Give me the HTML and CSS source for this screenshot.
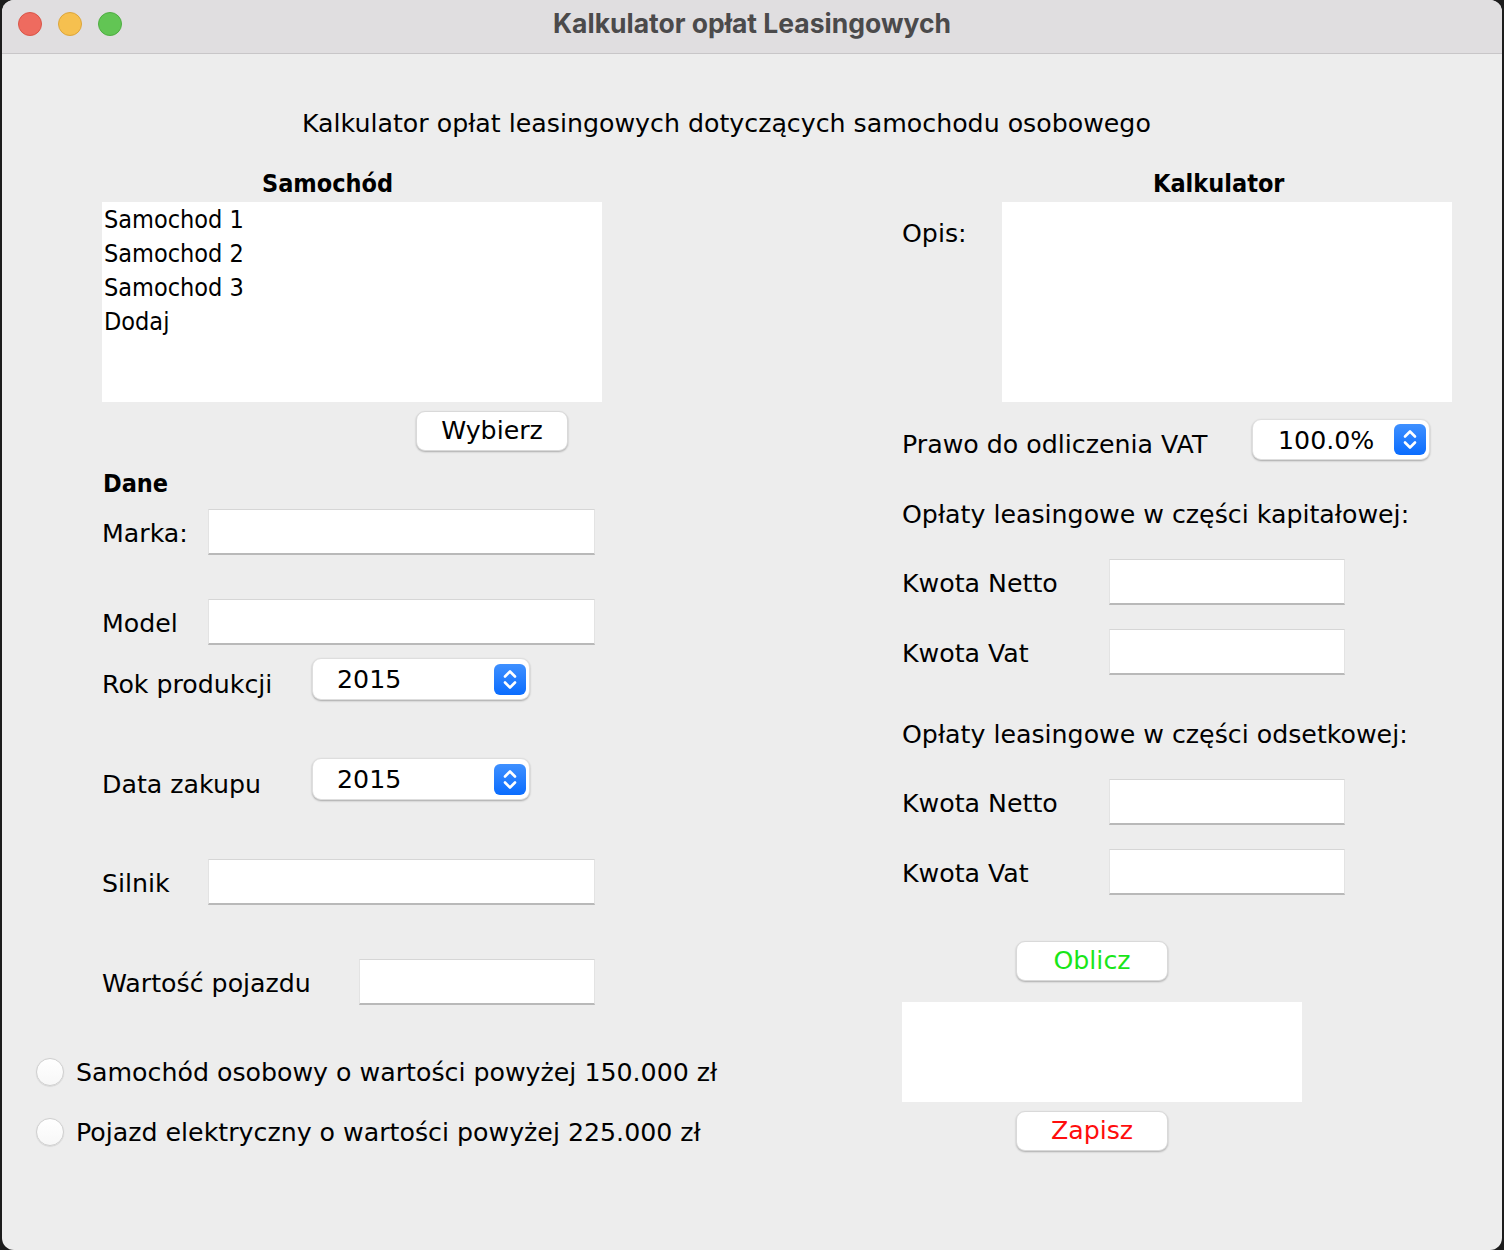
FILE: index.html
```html
<!DOCTYPE html>
<html lang="pl">
<head>
<meta charset="utf-8">
<title>Kalkulator opłat Leasingowych</title>
<link rel="stylesheet" href="styles.css">
</head>
<body>
<div class="window">
  <div class="titlebar">
    <div class="lights">
      <span class="light red"></span>
      <span class="light yellow"></span>
      <span class="light green"></span>
    </div>
    <div class="wtitle">Kalkulator opłat Leasingowych</div>
    <div></div>
  </div>
  <div class="content">
    <div class="heading">Kalkulator opłat leasingowych dotyczących samochodu osobowego</div>
    <div class="columns">
      <div class="col-left">
        <div class="sec-title sec-samochod">Samochód</div>
        <div class="listbox">
          <div class="item">Samochod 1</div>
          <div class="item">Samochod 2</div>
          <div class="item">Samochod 3</div>
          <div class="item">Dodaj</div>
        </div>
        <div class="btn btn-wybierz">Wybierz</div>
        <div class="sec-title sec-dane">Dane</div>
        <div class="row r-marka"><span class="lbl w106">Marka:</span><span class="field w387"></span></div>
        <div class="row r-model"><span class="lbl w106">Model</span><span class="field w387"></span></div>
        <div class="row crow r-rok"><span class="lbl w210">Rok produkcji</span><span class="combo w218"><span class="ctext">2015</span><span class="stepper"><svg width="32" height="31" viewBox="0 0 32 31"><path d="M11 12.5 L16 7.5 L21 12.5 M11 18.5 L16 23.5 L21 18.5" fill="none" stroke="#fff" stroke-width="2.6" stroke-linecap="round" stroke-linejoin="round"/></svg></span></span></div>
        <div class="row crow r-data"><span class="lbl w210">Data zakupu</span><span class="combo w218"><span class="ctext">2015</span><span class="stepper"><svg width="32" height="31" viewBox="0 0 32 31"><path d="M11 12.5 L16 7.5 L21 12.5 M11 18.5 L16 23.5 L21 18.5" fill="none" stroke="#fff" stroke-width="2.6" stroke-linecap="round" stroke-linejoin="round"/></svg></span></span></div>
        <div class="row r-silnik"><span class="lbl w106">Silnik</span><span class="field w387"></span></div>
        <div class="row r-wartosc"><span class="lbl w257">Wartość pojazdu</span><span class="field w236"></span></div>
        <div class="radio-row r-radio1"><span class="radio"></span><span class="rlbl">Samochód osobowy o wartości powyżej 150.000 zł</span></div>
        <div class="radio-row r-radio2"><span class="radio"></span><span class="rlbl">Pojazd elektryczny o wartości powyżej 225.000 zł</span></div>
      </div>
      <div class="col-right">
        <div class="sec-title sec-kalk">Kalkulator</div>
        <div class="opis-row">
          <span class="lbl w100 opis-lbl">Opis:</span>
          <div class="textarea"></div>
        </div>
        <div class="row crow r-vat"><span class="lbl w350">Prawo do odliczenia VAT</span><span class="combo w178 vat"><span class="ctext">100.0%</span><span class="stepper"><svg width="32" height="31" viewBox="0 0 32 31"><path d="M11 12.5 L16 7.5 L21 12.5 M11 18.5 L16 23.5 L21 18.5" fill="none" stroke="#fff" stroke-width="2.6" stroke-linecap="round" stroke-linejoin="round"/></svg></span></span></div>
        <div class="subhead r-kap">Opłaty leasingowe w części kapitałowej:</div>
        <div class="row r-n1"><span class="lbl w207">Kwota Netto</span><span class="field w236"></span></div>
        <div class="row r-v1"><span class="lbl w207">Kwota Vat</span><span class="field w236"></span></div>
        <div class="subhead r-ods">Opłaty leasingowe w części odsetkowej:</div>
        <div class="row r-n2"><span class="lbl w207">Kwota Netto</span><span class="field w236"></span></div>
        <div class="row r-v2"><span class="lbl w207">Kwota Vat</span><span class="field w236"></span></div>
        <div class="btn btn-oblicz">Oblicz</div>
        <div class="result"></div>
        <div class="btn btn-zapisz">Zapisz</div>
      </div>
    </div>
  </div>
</div>
</body>
</html>
```

FILE: styles.css
```css
html, body {
  margin: 0;
  padding: 0;
  background: #1c1c1c;
}
body {
  width: 1504px;
  height: 1250px;
  overflow: hidden;
}
.window {
  margin-left: 2px;
  width: 1500px;
  height: 1250px;
  background: #ededed;
  border-radius: 12px;
  overflow: hidden;
  font-family: "DejaVu Sans", sans-serif;
  font-size: 25.25px;
  color: #000;
}
.titlebar {
  height: 53px;
  background: #e0dee0;
  border-bottom: 1px solid #c8c6c8;
  display: grid;
  grid-template-columns: 1fr auto 1fr;
  align-items: center;
}
.lights {
  display: flex;
  gap: 16px;
  padding-left: 16px;
  margin-top: -6px;
}
.light {
  width: 24px;
  height: 24px;
  border-radius: 50%;
  box-sizing: border-box;
}
.red { background: #ee6b5f; border: 1px solid #d95548; }
.yellow { background: #f6c04f; border: 1px solid #dca53b; }
.green { background: #62c554; border: 1px solid #4fad42; }
.wtitle {
  font-family: Inter, "Liberation Sans", sans-serif;
  font-weight: 700;
  font-size: 26.5px;
  color: #4b4a4b;
  margin-top: -7px;
}
.heading {
  margin-top: 51px;
  line-height: 34px;
  padding-top: 2px;
  height: 32px;
  padding-left: 300px;
  white-space: nowrap;
}
.columns {
  display: flex;
  margin-top: 27px;
}
.col-left {
  margin-left: 34px;
  width: 866px;
  display: flex;
  flex-direction: column;
  align-items: flex-start;
}
.col-right {
  width: 560px;
  display: flex;
  flex-direction: column;
  align-items: flex-start;
}
.sec-title {
  font-family: "DejaVu Sans Condensed", "DejaVu Sans", sans-serif;
  font-size: 25px;
  font-weight: 700;
  line-height: 34px;
  height: 34px;
  padding-top: 1px;
  box-sizing: border-box;
  white-space: nowrap;
}
.sec-samochod { margin-left: 226px; }
.sec-kalk { margin-left: 251px; }
.sec-dane { margin-left: 67px; margin-top: 15px; }
.listbox {
  margin-top: 2px;
  margin-left: 66px;
  width: 500px;
  height: 200px;
  background: #fff;
  padding: 0 2px;
  box-sizing: border-box;
  font-family: "DejaVu Sans Condensed", "DejaVu Sans", sans-serif;
  font-size: 25px;
}
.item {
  line-height: 34px;
  height: 34px;
  padding-top: 1px;
  box-sizing: border-box;
  white-space: nowrap;
}
.btn {
  width: 152px;
  height: 40px;
  box-sizing: border-box;
  background: #fff;
  border-radius: 9px;
  border: 1px solid #d9d9d9;
  box-shadow: 0 1px 2px rgba(0,0,0,0.28);
  display: flex;
  align-items: center;
  justify-content: center;
  line-height: 1;
}
.btn-wybierz { margin-top: 9px; margin-left: 380px; }
.row {
  display: flex;
  align-items: center;
  margin-left: 66px;
}
.lbl {
  line-height: 34px;
  padding-top: 3px;
  white-space: nowrap;
  flex: none;
}
.w100 { width: 100px; }
.w106 { width: 106px; }
.w207 { width: 207px; }
.w210 { width: 210px; }
.w257 { width: 257px; }
.w350 { width: 350px; }
.field {
  display: block;
  height: 46px;
  background: #fff;
  box-sizing: border-box;
  border-top: 1px solid #d6d6d6;
  border-left: 1px solid #e3e3e3;
  border-right: 1px solid #e3e3e3;
  border-bottom: 2px solid #b9b9b9;
}
.w387 { width: 387px; }
.w236 { width: 236px; }
.w218 { width: 218px; }
.w178 { width: 178px; }
.r-marka { margin-top: 9px; height: 46px; }
.r-model { margin-top: 44px; height: 46px; }
.crow { height: 50px; }
.crow .combo { align-self: flex-start; }
.r-rok { margin-top: 13px; }
.r-data { margin-top: 50px; }
.r-silnik { margin-top: 51px; height: 46px; }
.r-wartosc { margin-top: 54px; height: 46px; }
.combo {
  display: flex;
  align-items: center;
  justify-content: space-between;
  height: 42px;
  box-sizing: border-box;
  background: #fff;
  border-radius: 9px;
  border: 1px solid #dedede;
  box-shadow: 0 1px 2px rgba(0,0,0,0.3);
  padding: 0 3px 0 24px;
}
.vat { height: 41px; padding-left: 25px; }
.ctext { line-height: 34px; padding-top: 2px; }
.stepper {
  width: 32px;
  height: 31px;
  border-radius: 6px;
  background: linear-gradient(#3f90ff, #0a6cfe);
  display: block;
}
.stepper svg { display: block; }
.radio-row {
  display: flex;
  align-items: center;
  height: 40px;
}
.r-radio1 { margin-top: 47px; }
.r-radio2 { margin-top: 20px; }
.radio {
  width: 28px;
  height: 28px;
  box-sizing: border-box;
  border-radius: 50%;
  background: linear-gradient(#ffffff, #f7f7f7);
  border: 1px solid #cfcfcf;
  box-shadow: 0 0.5px 1px rgba(0,0,0,0.15);
  margin-right: 12px;
}
.rlbl { line-height: 34px; padding-top: 2px; white-space: nowrap; }
.opis-row {
  display: flex;
  margin-top: 2px;
  align-items: flex-start;
}
.opis-lbl { margin-top: 12px; }
.textarea {
  width: 450px;
  height: 200px;
  background: #fff;
}
.r-vat { margin-left: 0; margin-top: 17px; height: 48px; }
.col-right .row { margin-left: 0; }
.subhead { line-height: 34px; height: 34px; padding-top: 2px; box-sizing: border-box; white-space: nowrap; }
.r-kap { margin-top: 29px; }
.r-ods { margin-top: 41px; }
.r-n1, .r-n2 { margin-top: 29px; height: 46px; }
.r-v1, .r-v2 { margin-top: 24px; height: 46px; }
.btn-oblicz { margin-top: 46px; margin-left: 114px; color: #19e619; }
.result {
  margin-top: 21px;
  width: 400px;
  height: 100px;
  background: #fff;
}
.btn-zapisz { margin-top: 9px; margin-left: 114px; color: #ff0d0d; }
```
